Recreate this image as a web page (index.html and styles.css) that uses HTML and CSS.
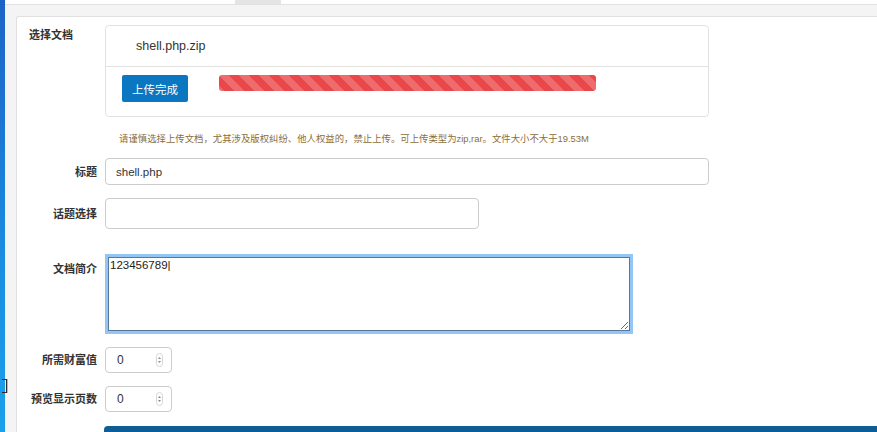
FILE: index.html
```html
<!DOCTYPE html>
<html lang="zh-CN">
<head>
    <meta charset="UTF-8">
    <title>上传文档</title>
    <link rel="stylesheet" href="styles.css">
</head>
<body>
    <div class="desk">
        <span class="desk-icon"></span>
    </div>
    <div class="page">
        <div class="topnav"><span class="tab"></span></div>

        <div class="panel">
            <!-- 选择文档 -->
            <div class="row row-top">
                <div class="label label-left">选择文档</div>
                <div class="upload">
                    <div class="upload-file">shell.php.zip</div>
                    <div class="upload-actions">
                        <button class="btn">上传完成</button>
                        <div class="progress"></div>
                    </div>
                </div>
            </div>
            <p class="hint">请谨慎选择上传文档，尤其涉及版权纠纷、他人权益的，禁止上传。可上传类型为zip,rar。文件大小不大于19.53M</p>

            <div class="row row-title">
                <div class="label">标题</div>
                <input type="text" class="field field-title" value="shell.php">
            </div>

            <div class="row row-topic">
                <div class="label">话题选择</div>
                <input type="text" class="field field-topic">
            </div>

            <div class="row row-top row-desc">
                <div class="label label-desc">文档简介</div>
                <textarea class="field-desc">123456789|</textarea>
            </div>

            <div class="row row-num">
                <div class="label">所需财富值</div>
                <div class="num">
                    <input type="text" class="field field-num" value="0">
                    <svg class="spin" width="7" height="14" viewBox="0 0 7 14">
                        <rect x="0.5" y="0.5" width="6" height="13" rx="3" fill="#fff" stroke="#d6d6d6"/>
                        <path d="M2 6 L3.5 4 L5 6 Z" fill="#8a8a8a"/>
                        <path d="M2 8 L3.5 10 L5 8 Z" fill="#8a8a8a"/>
                    </svg>
                </div>
            </div>

            <div class="row row-num">
                <div class="label">预览显示页数</div>
                <div class="num">
                    <input type="text" class="field field-num" value="0">
                    <svg class="spin" width="7" height="14" viewBox="0 0 7 14">
                        <rect x="0.5" y="0.5" width="6" height="13" rx="3" fill="#fff" stroke="#d6d6d6"/>
                        <path d="M2 6 L3.5 4 L5 6 Z" fill="#8a8a8a"/>
                        <path d="M2 8 L3.5 10 L5 8 Z" fill="#8a8a8a"/>
                    </svg>
                </div>
            </div>

            <div class="submit-bar"></div>
        </div>
    </div>
</body>
</html>
```

FILE: styles.css
```css
body {
    margin: 0;
    height: 432px;
    overflow: hidden;
    display: flex;
    font-family: "Liberation Sans", "Noto Sans CJK SC", sans-serif;
    color: #333;
}
.desk {
    position: relative;
    width: 5px;
    background: linear-gradient(#1c63c6, #1a8de0 60%, #1aa0ea);
}
/* 桌面图标残影 */
.desk-icon {
    position: absolute;
    left: 2px;
    top: 379px;
    width: 4px;
    height: 12px;
    border: 1px solid #2a2a2a;
    border-left: none;
    box-shadow: 1px 0 0 #e0b85a;
}
.page {
    flex: 1;
    display: flex;
    flex-direction: column;
    background: #f4f4f4;
}
.topnav {
    height: 4px;
    background: #fff;
    border-bottom: 1px solid #e2e2e2;
}
.tab {
    display: block;
    margin-left: 230px;
    width: 46px;
    height: 4px;
    background: #e4e4e4;
}
.panel {
    flex: 1;
    margin: 11px 0 0 11px;
    padding-top: 8px;
    background: #fff;
    border: 1px solid #e0e0e0;
    border-right: none;
    border-radius: 3px 0 0 0;
}
.row {
    display: flex;
    align-items: center;
}
.row-top {
    align-items: flex-start;
}
.label {
    width: 80px;
    margin-right: 8px;
    text-align: right;
    font-size: 11px;
    font-weight: bold;
    line-height: 16px;
    color: #333;
}
.label-left {
    text-align: left;
    box-sizing: border-box;
    padding: 2px 0 0 12px;
}
.label-desc {
    padding-top: 7px;
}

/* 上传框 */
.upload {
    width: 604px;
    box-sizing: border-box;
    border: 1px solid #e2e2e2;
    border-radius: 4px;
}
.upload-file {
    height: 40px;
    display: flex;
    align-items: center;
    padding-left: 30px;
    border-bottom: 1px solid #e2e2e2;
    font-size: 12.5px;
    color: #333;
}
.upload-actions {
    height: 49px;
    box-sizing: border-box;
    padding: 8px 0 0 16px;
    display: flex;
    align-items: flex-start;
}
.btn {
    width: 66px;
    height: 27px;
    padding: 0;
    border: none;
    border-radius: 2px;
    background: #0b77c0;
    color: #fff;
    font-family: "Noto Sans CJK SC", sans-serif;
    font-size: 11.5px;
}
.progress {
    margin-left: 31px;
    width: 377px;
    height: 16px;
    border-radius: 3px;
    background-color: #ea474a;
    background-image: linear-gradient(45deg, rgba(255,255,255,.2) 25%, transparent 25%, transparent 50%, rgba(255,255,255,.2) 50%, rgba(255,255,255,.2) 75%, transparent 75%, transparent);
    background-size: 20px 20px;
}
.hint {
    margin: 15px 0 0 102px;
    font-size: 9.4px;
    line-height: 14px;
    color: #8a6d3b;
}

/* 表单字段 */
.field {
    box-sizing: border-box;
    border: 1px solid #ccc;
    border-radius: 4px;
    padding: 0 10px;
    font-family: "Liberation Sans", sans-serif;
    font-size: 11.5px;
    color: #333;
    background: #fff;
}
.row-title {
    margin-top: 12px;
}
.field-title {
    width: 604px;
    height: 27px;
}
.row-topic {
    margin-top: 13px;
}
.field-topic {
    width: 374px;
    height: 31px;
}
.row-desc {
    margin-top: 25px;
}
.field-desc {
    box-sizing: border-box;
    margin: 3px 0 3px 3px;
    width: 522px;
    height: 74px;
    padding: 1px 1px;
    border: 1px solid #56799a;
    border-radius: 0;
    outline: none;
    box-shadow: 0 0 0 3px #93c6f4;
    font-family: "Liberation Sans", sans-serif;
    font-size: 11.5px;
    color: #222;
    resize: both;
}
.row-num {
    margin-top: 13px;
}
.num {
    position: relative;
}
.field-num {
    display: block;
    width: 67px;
    height: 26px;
    padding-left: 11px;
    font-size: 12px;
}
.spin {
    position: absolute;
    left: 51px;
    top: 6px;
}
.submit-bar {
    margin: 14px 0 0 87px;
    height: 30px;
    background: #0e5e96;
    border-radius: 4px 0 0 0;
}
```
